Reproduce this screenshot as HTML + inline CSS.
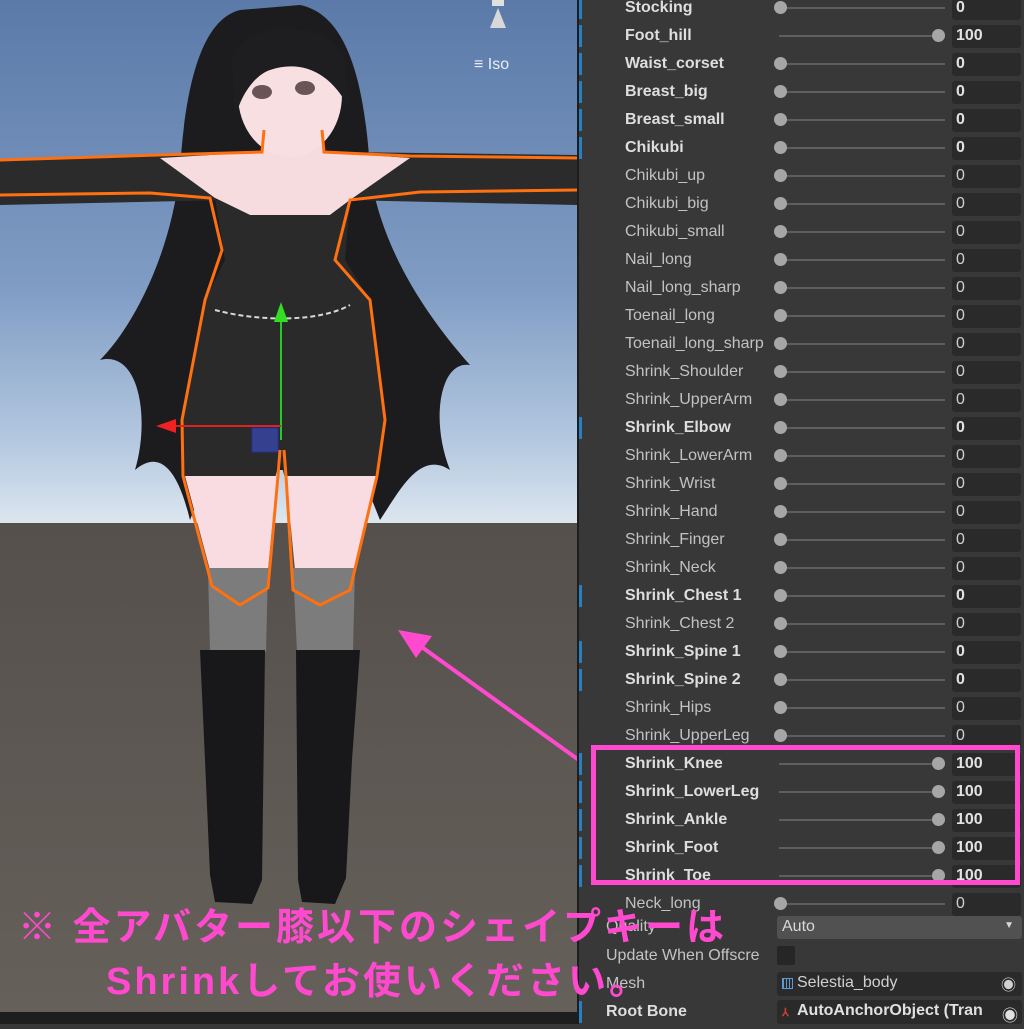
<!DOCTYPE html>
<html><head><meta charset="utf-8"><style>
*{margin:0;padding:0;box-sizing:border-box}
body{width:1024px;height:1024px;overflow:hidden;position:relative;background:#383838;font-family:"Liberation Sans","Noto Sans CJK JP",sans-serif}
#scene{position:absolute;left:0;top:0;width:577px;height:1024px}
#panel{position:absolute;left:577px;top:0;width:447px;height:1024px;background:#383838;border-left:2px solid #1e1e1e}
.row{position:absolute;left:0;width:447px;height:28px}
.row .lb{position:absolute;left:46px;top:5px;font-size:16px;color:#c2c2c2;white-space:nowrap;width:154px;overflow:hidden}
.row.b .lb{font-weight:bold;color:#dedede}
.row.b .bar{position:absolute;left:0;top:3px;width:3px;height:22px;background:#2a7fc0}
.tr{position:absolute;left:200px;top:13px;width:166px;height:2px;background:#5e5e5e}
.kn{position:absolute;top:7px;width:13px;height:13px;border-radius:50%;background:#a6a6a6}
.vb{position:absolute;left:373px;top:3px;width:69px;height:23px;background:#2a2a2a;border-radius:3px;color:#d0d0d0;font-size:16px;padding:2px 0 0 4px}
.row.b .vb{font-weight:bold;color:#e2e2e2}
.f{position:absolute;font-size:15px;color:#c4c4c4;white-space:nowrap}
</style></head><body>
<div id="scene">
<svg width="577" height="1024" viewBox="0 0 577 1024">
<defs>
<linearGradient id="sky" x1="0" y1="0" x2="0" y2="1"><stop offset="0" stop-color="#5b7aa8"/><stop offset="0.55" stop-color="#7f9cc4"/><stop offset="0.85" stop-color="#b5c9e0"/><stop offset="1" stop-color="#dce6ef"/></linearGradient>
<linearGradient id="gr" x1="0" y1="0" x2="0" y2="1"><stop offset="0" stop-color="#55504c"/><stop offset="1" stop-color="#66605a"/></linearGradient>
</defs>
<rect width="577" height="523" fill="url(#sky)"/>
<rect y="523" width="577" height="490" fill="url(#gr)"/>
<rect y="1012" width="577" height="12" fill="#1e1e1e"/>
<polygon points="490,28 498,8 506,28" fill="#d8d8d8"/>
<rect x="492" y="0" width="12" height="6" fill="#e0e0e0"/>
<text x="474" y="69" font-size="16" fill="#e8eef5">≡ Iso</text>
<path d="M240,10 C200,20 185,90 180,170 C170,260 130,330 100,360 C140,350 150,420 135,470 C170,440 185,500 190,520 L210,470 L360,470 L380,520 C400,490 420,450 450,470 C430,420 440,360 470,365 C430,320 380,250 370,170 C365,90 350,15 300,5 Z" fill="#1c1b1d"/>
<path d="M0,160 L230,152 L230,200 L0,205 Z" fill="#2b2b2c"/>
<path d="M340,152 L577,155 L577,205 L340,200 Z" fill="#2b2b2c"/>
<path d="M160,158 L262,152 L266,110 L320,110 L324,152 L410,158 L350,200 L330,215 L250,215 L215,198 Z" fill="#f6dcdf"/>
<ellipse cx="290" cy="95" rx="52" ry="62" fill="#f7dfe2"/>
<path d="M232,60 C240,20 330,15 345,60 L350,110 C330,70 300,60 270,70 C255,75 240,95 235,120 Z" fill="#1e1d20"/>
<ellipse cx="262" cy="92" rx="10" ry="7" fill="#6a5458"/>
<ellipse cx="305" cy="88" rx="10" ry="7" fill="#6a5458"/>
<path d="M215,198 L250,215 L330,215 L350,200 L345,260 L370,300 L385,420 L375,478 L285,478 L280,460 L275,478 L185,478 L182,420 L205,300 L225,260 Z" fill="#2a2a2b"/>
<path d="M185,476 L277,476 L268,570 L210,570 Z" fill="#f8dce2"/>
<path d="M286,476 L378,476 L355,570 L295,570 Z" fill="#f8dce2"/>
<path d="M208,568 L268,568 L266,652 L210,652 Z" fill="#7c7c7c"/>
<path d="M293,568 L355,568 L353,652 L297,652 Z" fill="#7c7c7c"/>
<path d="M200,650 L265,650 L262,880 L252,904 L215,902 L210,875 L205,760 Z" fill="#18181a"/>
<path d="M296,650 L360,650 L352,760 L346,878 L335,904 L302,902 L298,880 Z" fill="#18181a"/>
<g fill="none" stroke="#ff7010" stroke-width="3">
<path d="M0,160 L158,155 L262,152 L264,130 M322,130 L324,152 L410,156 L577,158"/>
<path d="M0,195 L150,193 L210,198 L222,250 L205,300 L182,420 L183,476 L212,586 L240,605 L268,588 L278,476 L280,450"/>
<path d="M577,190 L420,192 L350,200 L335,260 L370,300 L385,420 L377,476 L350,590 L320,605 L293,590 L286,476 L284,450"/>
</g>
<path d="M215,310 C260,322 320,322 350,305" stroke="#d8d8d8" stroke-width="2" fill="none" stroke-dasharray="5 3"/>
<line x1="281" y1="318" x2="281" y2="440" stroke="#22cc22" stroke-width="2"/>
<polygon points="274,322 281,302 288,322" fill="#33dd22"/>
<line x1="175" y1="426" x2="281" y2="426" stroke="#dd2222" stroke-width="2"/>
<polygon points="176,419 156,426 176,433" fill="#ee2222"/>
<rect x="252" y="428" width="26" height="24" fill="#3a4ab8" opacity="0.7" stroke="#2233cc"/>
<line x1="412" y1="640" x2="590" y2="768" stroke="#ff4ad0" stroke-width="4"/>
<polygon points="398,630 432,636 416,658" fill="#ff4ad0"/>
</svg>
</div>
<div id="panel">
<div class="row b" style="top:-6px"><div class="bar"></div><div class="lb">Stocking</div><div class="tr"></div><div class="kn" style="left:195px"></div><div class="vb">0</div></div>
<div class="row b" style="top:22px"><div class="bar"></div><div class="lb">Foot_hill</div><div class="tr"></div><div class="kn" style="left:353px"></div><div class="vb">100</div></div>
<div class="row b" style="top:50px"><div class="bar"></div><div class="lb">Waist_corset</div><div class="tr"></div><div class="kn" style="left:195px"></div><div class="vb">0</div></div>
<div class="row b" style="top:78px"><div class="bar"></div><div class="lb">Breast_big</div><div class="tr"></div><div class="kn" style="left:195px"></div><div class="vb">0</div></div>
<div class="row b" style="top:106px"><div class="bar"></div><div class="lb">Breast_small</div><div class="tr"></div><div class="kn" style="left:195px"></div><div class="vb">0</div></div>
<div class="row b" style="top:134px"><div class="bar"></div><div class="lb">Chikubi</div><div class="tr"></div><div class="kn" style="left:195px"></div><div class="vb">0</div></div>
<div class="row" style="top:162px"><div class="lb">Chikubi_up</div><div class="tr"></div><div class="kn" style="left:195px"></div><div class="vb">0</div></div>
<div class="row" style="top:190px"><div class="lb">Chikubi_big</div><div class="tr"></div><div class="kn" style="left:195px"></div><div class="vb">0</div></div>
<div class="row" style="top:218px"><div class="lb">Chikubi_small</div><div class="tr"></div><div class="kn" style="left:195px"></div><div class="vb">0</div></div>
<div class="row" style="top:246px"><div class="lb">Nail_long</div><div class="tr"></div><div class="kn" style="left:195px"></div><div class="vb">0</div></div>
<div class="row" style="top:274px"><div class="lb">Nail_long_sharp</div><div class="tr"></div><div class="kn" style="left:195px"></div><div class="vb">0</div></div>
<div class="row" style="top:302px"><div class="lb">Toenail_long</div><div class="tr"></div><div class="kn" style="left:195px"></div><div class="vb">0</div></div>
<div class="row" style="top:330px"><div class="lb">Toenail_long_sharp</div><div class="tr"></div><div class="kn" style="left:195px"></div><div class="vb">0</div></div>
<div class="row" style="top:358px"><div class="lb">Shrink_Shoulder</div><div class="tr"></div><div class="kn" style="left:195px"></div><div class="vb">0</div></div>
<div class="row" style="top:386px"><div class="lb">Shrink_UpperArm</div><div class="tr"></div><div class="kn" style="left:195px"></div><div class="vb">0</div></div>
<div class="row b" style="top:414px"><div class="bar"></div><div class="lb">Shrink_Elbow</div><div class="tr"></div><div class="kn" style="left:195px"></div><div class="vb">0</div></div>
<div class="row" style="top:442px"><div class="lb">Shrink_LowerArm</div><div class="tr"></div><div class="kn" style="left:195px"></div><div class="vb">0</div></div>
<div class="row" style="top:470px"><div class="lb">Shrink_Wrist</div><div class="tr"></div><div class="kn" style="left:195px"></div><div class="vb">0</div></div>
<div class="row" style="top:498px"><div class="lb">Shrink_Hand</div><div class="tr"></div><div class="kn" style="left:195px"></div><div class="vb">0</div></div>
<div class="row" style="top:526px"><div class="lb">Shrink_Finger</div><div class="tr"></div><div class="kn" style="left:195px"></div><div class="vb">0</div></div>
<div class="row" style="top:554px"><div class="lb">Shrink_Neck</div><div class="tr"></div><div class="kn" style="left:195px"></div><div class="vb">0</div></div>
<div class="row b" style="top:582px"><div class="bar"></div><div class="lb">Shrink_Chest 1</div><div class="tr"></div><div class="kn" style="left:195px"></div><div class="vb">0</div></div>
<div class="row" style="top:610px"><div class="lb">Shrink_Chest 2</div><div class="tr"></div><div class="kn" style="left:195px"></div><div class="vb">0</div></div>
<div class="row b" style="top:638px"><div class="bar"></div><div class="lb">Shrink_Spine 1</div><div class="tr"></div><div class="kn" style="left:195px"></div><div class="vb">0</div></div>
<div class="row b" style="top:666px"><div class="bar"></div><div class="lb">Shrink_Spine 2</div><div class="tr"></div><div class="kn" style="left:195px"></div><div class="vb">0</div></div>
<div class="row" style="top:694px"><div class="lb">Shrink_Hips</div><div class="tr"></div><div class="kn" style="left:195px"></div><div class="vb">0</div></div>
<div class="row" style="top:722px"><div class="lb">Shrink_UpperLeg</div><div class="tr"></div><div class="kn" style="left:195px"></div><div class="vb">0</div></div>
<div class="row b" style="top:750px"><div class="bar"></div><div class="lb">Shrink_Knee</div><div class="tr"></div><div class="kn" style="left:353px"></div><div class="vb">100</div></div>
<div class="row b" style="top:778px"><div class="bar"></div><div class="lb">Shrink_LowerLeg</div><div class="tr"></div><div class="kn" style="left:353px"></div><div class="vb">100</div></div>
<div class="row b" style="top:806px"><div class="bar"></div><div class="lb">Shrink_Ankle</div><div class="tr"></div><div class="kn" style="left:353px"></div><div class="vb">100</div></div>
<div class="row b" style="top:834px"><div class="bar"></div><div class="lb">Shrink_Foot</div><div class="tr"></div><div class="kn" style="left:353px"></div><div class="vb">100</div></div>
<div class="row b" style="top:862px"><div class="bar"></div><div class="lb">Shrink_Toe</div><div class="tr"></div><div class="kn" style="left:353px"></div><div class="vb">100</div></div>
<div class="row" style="top:890px"><div class="lb">Neck_long</div><div class="tr"></div><div class="kn" style="left:195px"></div><div class="vb">0</div></div>
<div class="f" style="left:27px;top:918px;font-size:16px">Quality</div>
<div style="position:absolute;left:198px;top:916px;width:245px;height:23px;background:#515151;border-radius:3px;color:#d8d8d8;font-size:16px;padding:2px 0 0 5px">Auto<span style="position:absolute;right:8px;top:4px;font-size:10px">▼</span></div>
<div class="f" style="left:27px;top:947px;font-size:16px">Update When Offscre</div>
<div style="position:absolute;left:198px;top:946px;width:18px;height:19px;background:#262626;border-radius:2px"></div>
<div class="f" style="left:27px;top:975px;font-size:16px">Mesh</div>
<div style="position:absolute;left:198px;top:972px;width:245px;height:24px;background:#2a2a2a;border-radius:3px;color:#d0d0d0;font-size:16px;padding:2px 0 0 20px">Selestia_body<span style="position:absolute;left:5px;top:6px;width:11px;height:11px;border:1px solid #5a9ad0;background:repeating-linear-gradient(90deg,#5a9ad0 0 1px,transparent 1px 3px)"></span><span style="position:absolute;right:6px;top:2px;font-size:15px">◉</span></div>
<div class="row b" style="top:998px;height:26px"><div class="bar"></div></div>
<div class="f" style="left:27px;top:1003px;font-weight:bold;color:#dedede;font-size:16px">Root Bone</div>
<div style="position:absolute;left:198px;top:1000px;width:245px;height:24px;background:#2a2a2a;border-radius:3px;color:#e0e0e0;font-size:16px;font-weight:bold;padding:2px 0 0 20px;white-space:nowrap;overflow:hidden">AutoAnchorObject (Tran<span style="position:absolute;left:5px;top:6px;color:#d04030;font-size:11px">⅄</span><span style="position:absolute;right:0;top:0;width:24px;height:24px;background:#2a2a2a;font-weight:normal;padding:2px 0 0 4px">◉</span></div>
</div>
<div style="position:absolute;left:591px;top:745px;width:429px;height:140px;border:5px solid #ff4ad0"></div>
<div style="position:absolute;left:18px;top:896px;font-size:38px;font-weight:bold;color:#ff4ad0;white-space:nowrap;letter-spacing:3px">※ 全アバター膝以下のシェイプキーは</div>
<div style="position:absolute;left:106px;top:950px;font-size:38px;font-weight:bold;color:#ff4ad0;white-space:nowrap;letter-spacing:3px">Shrinkしてお使いください。</div>
</body></html>
